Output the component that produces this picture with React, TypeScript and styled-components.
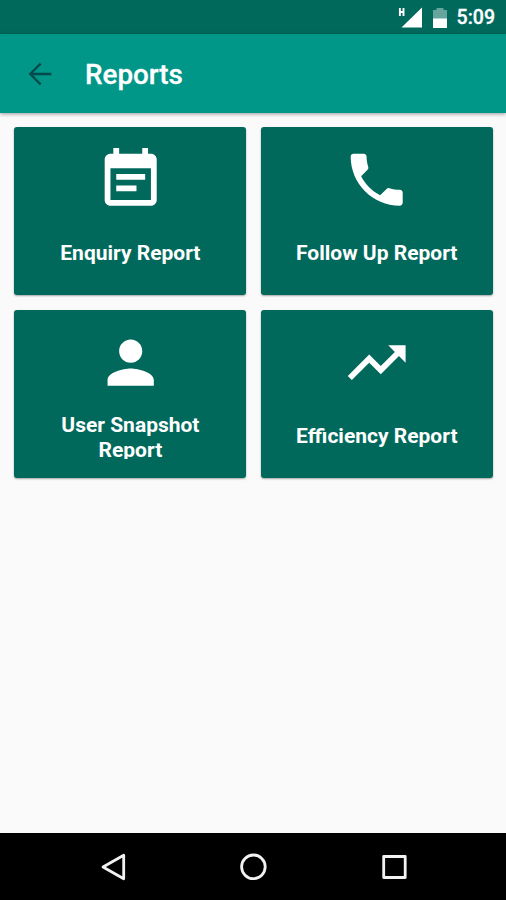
import React from "react";
import styled, { createGlobalStyle } from "styled-components";

const GlobalStyle = createGlobalStyle`
  * { box-sizing: border-box; }
  body { margin: 0; background: #fafafa; font-family: Roboto, "Liberation Sans", sans-serif; }
`;

const Screen = styled.div`
  display: flex;
  flex-direction: column;
  width: 506px;
  height: 900px;
  overflow: hidden;
  background: #fafafa;
`;

const StatusBar = styled.div`
  display: flex;
  align-items: center;
  justify-content: flex-end;
  height: 34px;
  flex: none;
  padding-right: 11px;
  background: #00695c;
  color: #fff;
`;

const Signal = styled.svg`
  width: 24px;
  height: 22px;
  margin-right: 11px;
`;

const Battery = styled.svg`
  width: 14px;
  height: 20px;
  margin: 2px 10px 0 0;
`;

const Clock = styled.span`
  padding-top: 2px;
  font-size: 19.5px;
  font-weight: 500;
  line-height: 34px;
  -webkit-text-stroke: 0.3px #fff;
`;

const AppBar = styled.header`
  display: flex;
  align-items: center;
  flex: none;
  height: 79px;
  padding-left: 23px;
  background: #009688;
  box-shadow: 0 1px 4px rgba(0, 0, 0, 0.4);
`;

const BackIcon = styled.svg`
  width: 34px;
  height: 34px;
  margin-right: 28px;
  fill: #07494a;
`;

const Title = styled.h1`
  margin: 0;
  padding-top: 2px;
  color: #fff;
  font-size: 27.8px;
  font-weight: 500;
  line-height: 34px;
  -webkit-text-stroke: 0.3px #fff;
`;

const CardGrid = styled.main`
  display: grid;
  flex: 1;
  grid-template-columns: 232px 232px;
  grid-auto-rows: 168.4px;
  gap: 14.4px;
  align-content: start;
  min-height: 0;
  padding: 14px 14px 0 14.4px;
`;

const Card = styled.section`
  display: flex;
  flex-direction: column;
  align-items: center;
  padding-top: 18px;
  border-radius: 3px;
  background: #00695c;
  box-shadow: 0 1px 2px rgba(0, 0, 0, 0.35);
`;

const CardIcon = styled.svg`
  width: 69.4px;
  height: 69.4px;
  flex: none;
  fill: #fff;
`;

const Label = styled.div`
  display: flex;
  justify-content: center;
  align-items: safe center;
  width: 170px;
  height: 46px;
  margin-top: 16px;
  overflow: hidden;
  color: #fff;
  font-size: 21px;
  font-weight: 700;
  line-height: 24.6px;
  text-align: center;
`;

const NavBar = styled.nav`
  display: grid;
  grid-template-columns: repeat(3, 140.5px);
  justify-content: center;
  justify-items: center;
  align-items: center;
  flex: none;
  height: 67px;
  background: #000;
`;

const NavIcon = styled.svg`
  width: 34px;
  height: 34px;
  fill: none;
  stroke: #f2f2f2;
  stroke-width: 2.8;
  stroke-linejoin: round;
`;

const reports = [
  {
    label: "Enquiry Report",
    path: "M17 10H7v2h10v-2zm2-7h-1V1h-2v2H8V1H6v2H5c-1.11 0-1.99.9-1.99 2L3 19c0 1.1.89 2 2 2h14c1.1 0 2-.9 2-2V5c0-1.1-.9-2-2-2zm0 16H5V8h14v11zm-5-5H7v2h7v-2z",
  },
  {
    label: "Follow Up Report",
    path: "M6.62 10.79c1.44 2.83 3.76 5.14 6.59 6.59l2.2-2.2c.27-.27.67-.36 1.02-.24 1.12.37 2.33.57 3.57.57.55 0 1 .45 1 1V20c0 .55-.45 1-1 1-9.39 0-17-7.61-17-17 0-.55.45-1 1-1h3.5c.55 0 1 .45 1 1 0 1.25.2 2.45.57 3.57.11.35.03.74-.25 1.02l-2.2 2.2z",
  },
  {
    label: "User Snapshot Report",
    path: "M12 12c2.21 0 4-1.79 4-4s-1.79-4-4-4-4 1.79-4 4 1.79 4 4 4zm0 2c-2.67 0-8 1.34-8 4v2h16v-2c0-2.66-5.33-4-8-4z",
  },
  {
    label: "Efficiency Report",
    path: "M16 6l2.29 2.29-4.88 4.88-4-4L2 16.59 3.41 18l6-6 4 4 6.3-6.29L22 12V6z",
  },
];

export default function App() {
  return (
    <Screen>
      <GlobalStyle />
      <StatusBar>
        <Signal viewBox="0 0 24 22">
          <path d="M24 1.5V21.5H3.5z" fill="#fff" />
          <path d="M1.9 2v8M5.5 2v8M1.9 6h3.6" stroke="#fff" strokeWidth="1.9" fill="none" />
        </Signal>
        <Battery viewBox="0 0 14 20">
          <path d="M0 2h3.5V0h7v2H14v9H0z" fill="#66a59d" />
          <path d="M0 10.5h14V20H0z" fill="#fff" />
        </Battery>
        <Clock>5:09</Clock>
      </StatusBar>
      <AppBar>
        <BackIcon viewBox="0 0 24 24">
          <path d="M20 11.2H7.1l5.9-5.9L11.85 4.1 4 12l7.85 7.9L13 18.7l-5.9-5.9H20z" />
        </BackIcon>
        <Title>Reports</Title>
      </AppBar>
      <CardGrid>
        {reports.map(({ label, path }) => (
          <Card key={label}>
            <CardIcon viewBox="0 0 24 24">
              <path d={path} />
            </CardIcon>
            <Label>{label}</Label>
          </Card>
        ))}
      </CardGrid>
      <NavBar>
        <NavIcon viewBox="0 0 34 34">
          <path d="M27.7 5.2v23.6L7 17z" />
        </NavIcon>
        <NavIcon viewBox="0 0 34 34">
          <circle cx="17.4" cy="16.8" r="11.8" />
        </NavIcon>
        <NavIcon viewBox="0 0 34 34">
          <rect x="6.7" y="6.5" width="21.5" height="21" />
        </NavIcon>
      </NavBar>
    </Screen>
  );
}
